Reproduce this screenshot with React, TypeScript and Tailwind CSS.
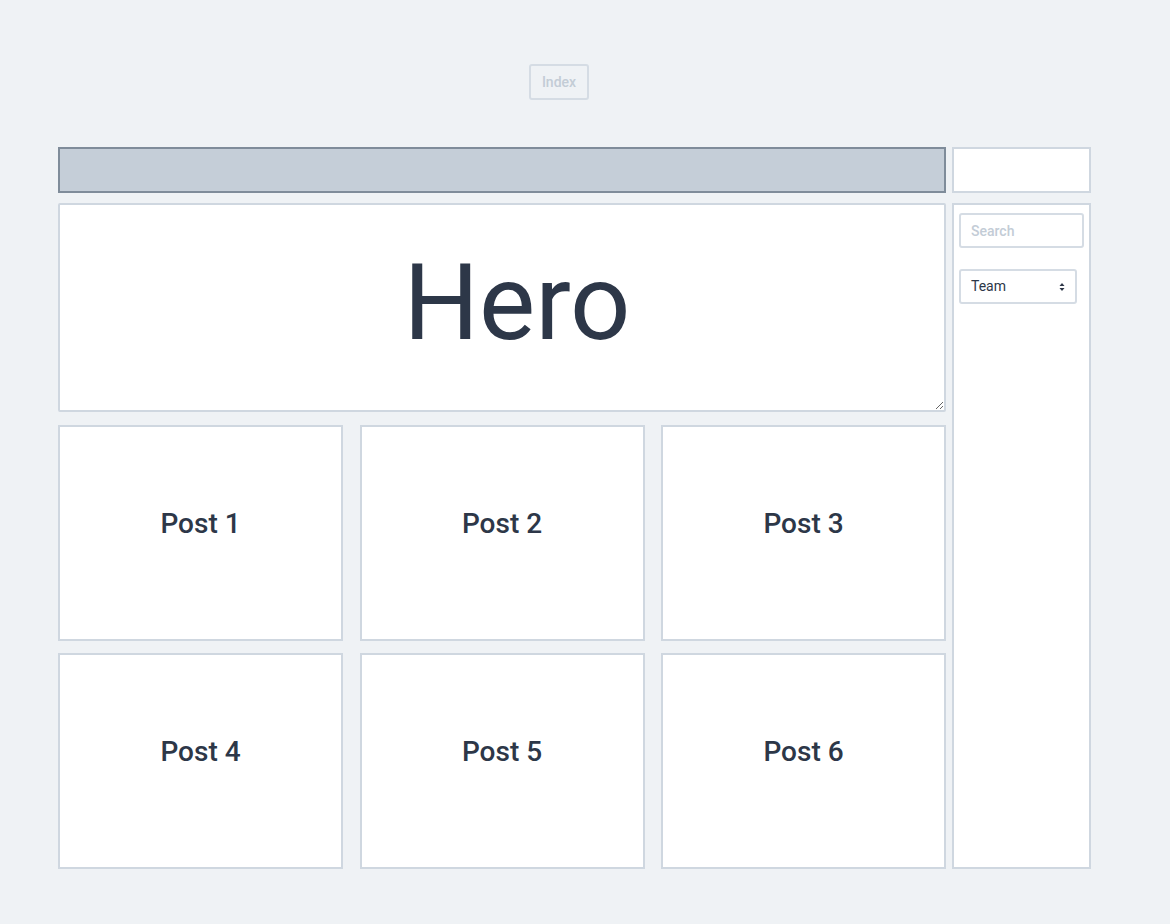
import React from "react";

const font = { fontFamily: 'Roboto, "Noto Sans", "Liberation Sans", sans-serif' };

function Post({ n }: { n: number }) {
  return (
    <div className="h-[216px] bg-white border-2 border-[#cfd7e0] flex justify-center pt-[79px]">
      <span className="text-[28px] leading-[36px] text-[#2d3748] font-medium">Post {n}</span>
    </div>
  );
}

export default function App() {
  return (
    <div style={font} className="min-h-[924px] w-full bg-[#eff2f5] flex flex-col items-start pl-[58px] pt-[64px]">
      <button className="ml-[471px] w-[60px] h-[36px] border-2 border-[#d5dce4] rounded-[3px] text-[14px] text-[#c3ccd6] bg-transparent font-medium">
        Index
      </button>
      <div className="mt-[47px] w-[1033px] grid grid-cols-[888px_139px] grid-rows-[46px_666px] gap-x-[6px] gap-y-[10px]">
        <div className="bg-[#c5ced8] border-2 border-[#7f8c9a]" />
        <div className="bg-white border-2 border-[#cfd7e0]" />
        <div className="flex flex-col">
          <textarea
            readOnly
            value="Hero"
            className="h-[209px] w-full bg-white border-2 border-[#cfd7e0] rounded-[2px] text-center text-[106px] leading-[120px] font-normal text-[#2d3748] pt-[38px] pl-[30px] resize overflow-hidden outline-none"
          />
          <div className="mt-[13px] grid grid-cols-3 gap-x-[16.5px] gap-y-[12px]">
            {[1, 2, 3, 4, 5, 6].map((n) => (
              <Post key={n} n={n} />
            ))}
          </div>
        </div>
        <div className="bg-white border-2 border-[#cfd7e0] flex flex-col items-start px-[5px] pt-[8px]">
          <input
            placeholder="Search"
            className="w-[125px] h-[35px] border-2 border-[#d5dce4] rounded-[3px] px-[10px] text-[14px] font-medium placeholder:text-[#c3ccd6] outline-none"
          />
          <div className="mt-[21px] w-[118px] h-[35px] border-2 border-[#d5dce4] rounded-[3px] flex items-center justify-between pl-[10px] pr-[10px] text-[14px] text-[#2d3748]">
            <span>Team</span>
            <svg width="6" height="10" viewBox="0 0 6 10">
              <path d="M0.5 4 L3 1 L5.5 4 Z" fill="#2d3748" />
              <path d="M0.5 6 L3 9 L5.5 6 Z" fill="#2d3748" />
            </svg>
          </div>
        </div>
      </div>
    </div>
  );
}
